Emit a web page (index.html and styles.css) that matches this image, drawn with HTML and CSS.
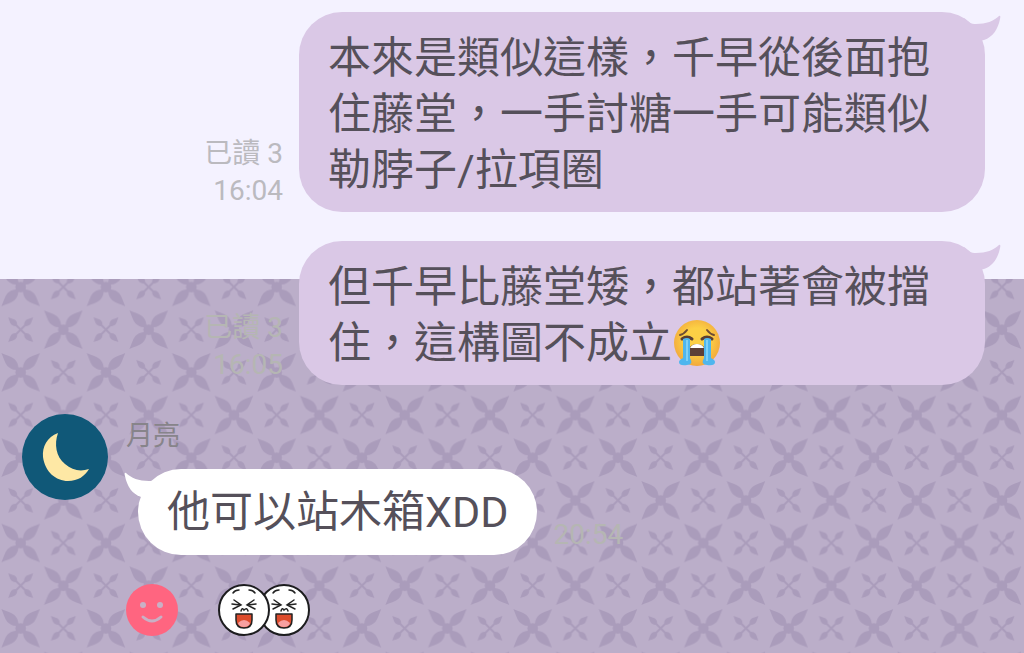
FILE: index.html
```html
<!DOCTYPE html>
<html lang="zh-Hant">
<head>
    <meta charset="UTF-8">
    <meta name="viewport" content="width=device-width, initial-scale=1.0">
    <title>月亮</title>
    <link rel="stylesheet" href="styles.css">
</head>
<body>

    <!-- Flower wallpaper -->
    <svg class="wallpaper" viewBox="0 0 3072 1122" preserveAspectRatio="xMinYMin slice" aria-hidden="true">
        <defs>
            <path id="petal" d="M0 -6 L16 -6 C24 -13 32 -15 42 -15 C54 -14 68 -5 82 0 C68 5 54 14 42 15 C32 15 24 13 16 6 L0 6 Z"/>
            <path id="leaf" d="M0 -3 L18 -3 C22 -8 27 -9 32 -9 C38 -8 44 -4 53 0 C44 4 38 8 32 9 C27 9 22 8 18 3 L0 3 Z"/>
            <g id="flower">
                <use href="#petal" transform="rotate(45)"/>
                <use href="#petal" transform="rotate(135)"/>
                <use href="#petal" transform="rotate(225)"/>
                <use href="#petal" transform="rotate(315)"/>
                <circle r="16"/>
            </g>
            <g id="sprig">
                <use href="#leaf" transform="rotate(45)"/>
                <use href="#leaf" transform="rotate(135)"/>
                <use href="#leaf" transform="rotate(225)"/>
                <use href="#leaf" transform="rotate(315)"/>
            </g>
            <pattern id="flowers" x="0" y="-40" width="256" height="256" patternUnits="userSpaceOnUse">
                <use href="#flower" x="62" y="64"/>
                <use href="#sprig" x="190" y="64"/>
                <use href="#sprig" x="62" y="192"/>
                <use href="#flower" x="190" y="192"/>
            </pattern>
        </defs>
        <rect width="3072" height="3072" fill="url(#flowers)"/>
    </svg>

    <main class="chat">
        <article class="message sent">
            <div class="meta">
                <span>已讀 3</span>
                <time>16:04</time>
            </div>
            <div class="bubble">
                <svg class="tail" viewBox="0 0 45 34" aria-hidden="true"><path d="M8 6 C13 11 15 12 20 12 C30 12 38 9 43 4 Q45 3 44 7 C42 17 37 25 28 28 L8 32 Z"/></svg>
                <p>本來是類似這樣，千早從後面抱住藤堂，一手討糖一手可能類似勒脖子/拉項圈</p>
            </div>
        </article>

        <article class="message sent">
            <div class="meta meta-dim">
                <span>已讀 3</span>
                <time>16:05</time>
            </div>
            <div class="bubble">
                <svg class="tail" viewBox="0 0 45 34" aria-hidden="true"><path d="M8 6 C13 11 15 12 20 12 C30 12 38 9 43 4 Q45 3 44 7 C42 17 37 25 28 28 L8 32 Z"/></svg>
                <p>但千早比藤堂矮，都站著會被擋住，這構圖不成立<svg class="emoji" viewBox="0 0 48 48" role="img" aria-label="大哭">
                    <defs>
                        <radialGradient id="face" cx="50%" cy="45%" r="55%">
                            <stop offset="0.5" stop-color="#fcd045"/>
                            <stop offset="1" stop-color="#f2a83c"/>
                        </radialGradient>
                    </defs>
                    <circle cx="24" cy="24" r="23" fill="url(#face)"/>
                    <path d="M7 16 Q11 15 14 11 M41 16 Q37 15 34 11" fill="none" stroke="#6d4c35" stroke-width="2" stroke-linecap="round"/>
                    <path d="M9 20 Q14 16 19 20 M39 20 Q34 16 29 20" fill="none" stroke="#5a4033" stroke-width="3" stroke-linecap="round"/>
                    <path d="M16 37 V30 Q18 25 24 25 Q30 25 32 30 V37 Z" fill="#5d4037"/>
                    <path d="M17 29 Q19 25 24 25 Q29 25 31 29 Z" fill="#fff"/>
                    <path d="M10 20 Q14 18 17 20 V39 Q21 46 14 46 Q6 47 6 43 Q6 41 10 39 Z" fill="#4fb6ee"/>
                    <path d="M38 20 Q34 18 31 20 V39 Q27 46 34 46 Q42 47 42 43 Q42 41 38 39 Z" fill="#4fb6ee"/>
                    <path d="M14 21 V42 M34 21 V42" fill="none" stroke="#7fd0f7" stroke-width="2"/>
                </svg></p>
            </div>
        </article>

        <article class="message received">
            <svg class="avatar" viewBox="0 0 86 86" role="img" aria-label="月亮">
                <circle cx="43" cy="43" r="43" fill="#105878"/>
                <path d="M36 19 C25 23 20 33 21 43 C23 58 34 67 46 67 C56 67 63 62 67 55 C58 58 50 56 43 50 C34 43 32 30 36 19 Z" fill="#fee8a5"/>
            </svg>
            <div class="content">
                <h2 class="name">月亮</h2>
                <div class="bubble-row">
                    <div class="bubble">
                        <svg class="tail" viewBox="0 0 45 34" aria-hidden="true"><path d="M8 6 C13 11 15 12 20 12 C30 12 38 9 43 4 Q45 3 44 7 C42 17 37 25 28 28 L8 32 Z"/></svg>
                        <p>他可以站木箱XDD</p>
                    </div>
                    <time class="meta meta-dim">20:54</time>
                </div>
                <div class="reactions">
                    <button class="react" type="button" aria-label="新增反應">
                        <svg viewBox="0 0 52 52" aria-hidden="true">
                            <circle cx="26" cy="26" r="26" fill="#ff6580"/>
                            <g fill="#c9b0c5">
                                <circle cx="17" cy="21" r="3"/>
                                <circle cx="34" cy="21" r="3"/>
                            </g>
                            <path d="M17 33 Q26 41 35 33" fill="none" stroke="#c9b0c5" stroke-width="3" stroke-linecap="round"/>
                        </svg>
                    </button>
                    <button class="reacted" type="button" aria-label="2 個反應">
                        <svg viewBox="0 0 92 52" aria-hidden="true">
                            <defs>
                                <g id="laugh">
                                    <circle cx="26" cy="26" r="25" fill="#fff" stroke="#1c1c1e" stroke-width="2"/>
                                    <g fill="none" stroke="#222" stroke-width="1.5" stroke-linecap="round">
                                        <path d="M15 9 Q17 6 21 6 M31 6 Q35 6 37 9"/>
                                        <path d="M16 16 L23 21 L15 25 M14 20 L22 21 M36 16 L29 21 L37 25 M30 21 L38 20"/>
                                        <path d="M23 27 Q24 23 26 26 Q29 23 30 27"/>
                                    </g>
                                    <path d="M18 30 H34 V36 Q34 44 26 44 Q18 44 18 36 Z" fill="#dc4b2c" stroke="#222" stroke-width="1.5" stroke-linejoin="round"/>
                                    <path d="M20 39 Q26 33 32 39 Q31 43 26 43 Q21 43 20 39 Z" fill="#f8a0a0"/>
                                </g>
                            </defs>
                            <use href="#laugh" x="40"/>
                            <use href="#laugh"/>
                        </svg>
                    </button>
                </div>
            </div>
        </article>
    </main>

</body>
</html>
```
FILE: styles.css
```css
* {
    box-sizing: border-box;
}

body {
    margin: 0;
    min-height: 100vh;
    position: relative;
    overflow: hidden;
    background-color: #f4f2ff;
    font-family: Roboto, "Noto Sans CJK TC", sans-serif;
    color: #55505a;
}

p,
h2 {
    margin: 0;
}

/* Wallpaper sits behind the lower part of the chat */
.wallpaper {
    position: absolute;
    top: 279px;
    left: 0;
    width: 100%;
    height: calc(100% - 279px);
    background-color: #bbaec9;
    fill: #aa9cbb;
}

.chat {
    position: relative;
    display: flex;
    flex-direction: column;
    gap: 29px;
    padding: 12px 39px 16px 22px;
}

.message {
    display: flex;
}

/* Bubbles */
.bubble {
    position: relative;
    border-radius: 43px;
    font-size: 43px;
    line-height: 56px;
}

.tail {
    position: absolute;
    top: 0;
    width: 45px;
    height: 34px;
}

.sent {
    justify-content: flex-end;
    align-items: flex-end;
    gap: 16px;
}

.sent .bubble {
    width: 686px;
    padding: 18px 50px 14px 29px;
    background-color: #dac8e6;
}

.sent .tail {
    right: -16px;
    fill: #dac8e6;
}

.received {
    gap: 18px;
}

.received .bubble {
    padding: 15px 29px;
    background-color: #fff;
}

.received .tail {
    left: -14px;
    fill: #fff;
    transform: scaleX(-1);
}

/* Read count and time */
.meta {
    display: flex;
    flex-direction: column;
    align-items: flex-end;
    padding-bottom: 3px;
    font-size: 28px;
    line-height: 37px;
    color: #bbbabf;
}

.meta-dim {
    padding-bottom: 2px;
    color: #b5b6b3;
}

.emoji {
    width: 48px;
    height: 48px;
    margin-left: 1px;
    vertical-align: -9px;
}

/* Sender */
.avatar {
    width: 86px;
    height: 86px;
    flex-shrink: 0;
}

.name {
    padding-top: 2px;
    font-size: 27px;
    font-weight: 400;
    line-height: 40px;
    color: #87848a;
}

.bubble-row {
    display: flex;
    align-items: flex-end;
    gap: 16px;
    margin: 13px 0 29px 12px;
}

/* Reactions */
.reactions {
    display: flex;
    gap: 40px;
}

.reactions button {
    padding: 0;
    border: none;
    background: none;
    cursor: pointer;
}

.reactions svg {
    display: block;
    height: 52px;
}
```
